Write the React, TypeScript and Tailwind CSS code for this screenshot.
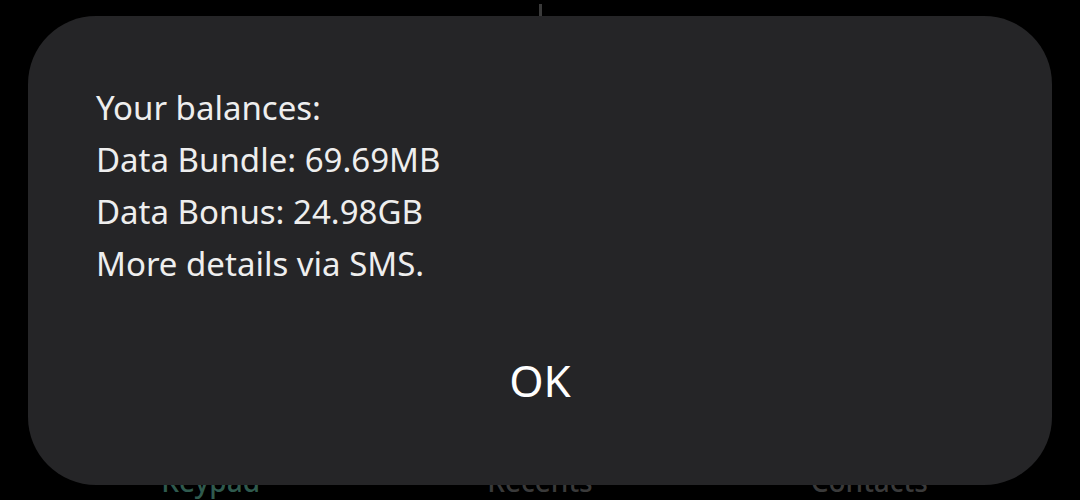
export default function App() {
  const font = { fontFamily: '"Noto Sans", "Open Sans", sans-serif' };
  return (
    <div className="relative w-[1080px] h-[500px] bg-black overflow-hidden" style={font}>
      <div className="absolute left-[539px] top-[4px] w-[3px] h-[14px] bg-[#3a3a3a]" />
      <div className="absolute left-0 right-0 top-[460px] flex px-[46px] text-[28px] font-medium">
        <div className="flex-1 text-center text-[#2f5a4e]">Keypad</div>
        <div className="flex-1 text-center text-[#3a3a3a]">Recents</div>
        <div className="flex-1 text-center text-[#3a3a3a]">Contacts</div>
      </div>
      <div className="relative z-10 mx-[28px] mt-[16px] h-[469px] rounded-[68px] bg-[#252527] flex flex-col">
        <div className="pl-[68px] pt-[66px] text-[33px] leading-[52px] text-[#eeeeee]">
          <div>Your balances:</div>
          <div>Data Bundle: 69.69MB</div>
          <div>Data Bonus: 24.98GB</div>
          <div>More details via SMS.</div>
        </div>
        <div className="mt-[62px] text-center text-[44px] leading-[56px] text-white">OK</div>
      </div>
    </div>
  );
}
